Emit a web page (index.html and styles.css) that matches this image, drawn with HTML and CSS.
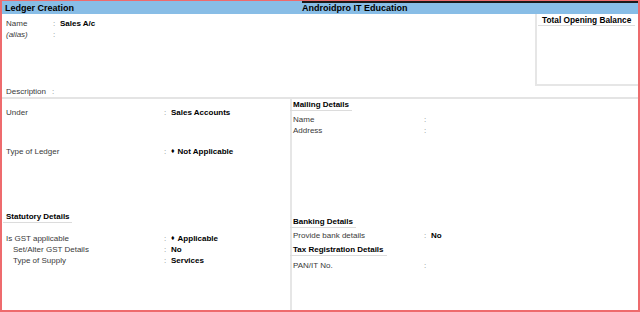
FILE: index.html
```html
<!DOCTYPE html>
<html>
<head>
<meta charset="utf-8">
<link rel="stylesheet" href="styles.css">
</head>
<body>
<div class="frame">
  <div class="header">
    <div class="h-left">Ledger Creation</div>
    <div class="h-right">Androidpro IT Education</div>
  </div>
  <div class="top">
    <div class="top-left">
      <div class="nrow"><span class="lbl">Name</span><span class="col">:</span><span class="val">Sales A/c</span></div>
      <div class="nrow"><span class="lbl it">(alias)</span><span class="col">:</span><span class="val"></span></div>
      <div class="desc"><span class="lbl">Description</span><span class="col dcol">:</span></div>
    </div>
    <div class="balance">
      <div class="bal-title">Total Opening Balance</div>
    </div>
  </div>
  <div class="bottom">
    <div class="left">
      <div class="row r-under"><span class="lbl">Under</span><span class="col">:</span><span class="val">Sales Accounts</span></div>
      <div class="row r-type"><span class="lbl">Type of Ledger</span><span class="col">:</span><span class="val"><span class="dia">♦</span>Not Applicable</span></div>
      <div class="sec s-stat"><span class="sec-t">Statutory Details</span></div>
      <div class="row r-gst"><span class="lbl">Is GST applicable</span><span class="col">:</span><span class="val"><span class="dia">♦</span>Applicable</span></div>
      <div class="row"><span class="lbl ind">Set/Alter GST Details</span><span class="col">:</span><span class="val">No</span></div>
      <div class="row"><span class="lbl ind">Type of Supply</span><span class="col">:</span><span class="val">Services</span></div>
    </div>
    <div class="right">
      <div class="sec s-mail"><span class="sec-t">Mailing Details</span></div>
      <div class="rrow r-name"><span class="lbl">Name</span><span class="col">:</span><span class="val"></span></div>
      <div class="rrow"><span class="lbl">Address</span><span class="col">:</span><span class="val"></span></div>
      <div class="sec s-bank"><span class="sec-t">Banking Details</span></div>
      <div class="rrow r-bank"><span class="lbl">Provide bank details</span><span class="col">:</span><span class="val">No</span></div>
      <div class="sec s-tax"><span class="sec-t">Tax Registration Details</span></div>
      <div class="rrow r-pan"><span class="lbl">PAN/IT No.</span><span class="col">:</span><span class="val"></span></div>
    </div>
  </div>
</div>
</body>
</html>
```
FILE: styles.css
```css
html, body {
  margin: 0;
  padding: 0;
  background: #fff;
}
body {
  font-family: "Liberation Sans", Arial, sans-serif;
  font-size: 8px;
  color: #333;
}
.frame {
  width: 640px;
  height: 312px;
  box-sizing: border-box;
  border: 2px solid #ee6b6d;
  border-top-width: 1px;
  display: flex;
  flex-direction: column;
}
.header {
  height: 13px;
  flex: none;
  display: grid;
  grid-template-columns: 300px 1fr;
  background: linear-gradient(to right, transparent 300px, #1a1a1a 300px) top left / 100% 2px no-repeat, #88bde6;
  font-size: 9px;
  font-weight: bold;
  color: #000;
  line-height: 14px;
}
.h-left { padding-left: 3px; }
.top {
  height: 83px;
  flex: none;
  display: flex;
  border-bottom: 2px solid #e4e4e4;
}
.top-left {
  flex: 1;
  display: flex;
  flex-direction: column;
  padding: 4px 0 0 4px;
}
.nrow {
  display: grid;
  grid-template-columns: 47px 7px auto;
  line-height: 11px;
}
.desc {
  margin-top: auto;
  line-height: 11px;
  display: flex;
}
.dcol { margin-left: 6px; }
.lbl { color: #3a3a3a; white-space: nowrap; }
.it { font-style: italic; }
.col { color: #8a8a8a; }
.val { font-weight: bold; color: #000; white-space: nowrap; }
.dia { font-size: 7px; line-height: 0; margin-right: 3px; vertical-align: 1px; }
.balance {
  width: 101px;
  height: 69px;
  border-left: 2px solid #e6e6e6;
  border-bottom: 2px solid #e6e6e6;
  padding-top: 1px;
}
.bal-title {
  margin: 0 3px 0 1px;
  padding-left: 4px;
  line-height: 10px;
  font-size: 8.3px;
  font-weight: bold;
  color: #000;
  border-bottom: 1px solid #dcdcdc;
}
.bottom {
  flex: 1;
  display: grid;
  grid-template-columns: 288px 2px 1fr;
}
.bottom::before {
  content: "";
  grid-column: 2;
  grid-row: 1;
  background: #e6e6e6;
}
.left {
  grid-column: 1;
  grid-row: 1;
  padding: 8px 0 0 4px;
}
.right {
  grid-column: 3;
  grid-row: 1;
  padding: 1px 0 0 1px;
}
.row {
  display: grid;
  grid-template-columns: 158px 7px auto;
  line-height: 11px;
}
.rrow {
  display: grid;
  grid-template-columns: 131px 7px auto;
  line-height: 11px;
}
.ind { padding-left: 7px; }
.r-type { margin-top: 28px; }
.sec { line-height: 11px; }
.sec-t {
  display: inline-block;
  font-weight: bold;
  color: #000;
  border-bottom: 1px solid #dcdcdc;
  padding: 0 2px 0 3px;
  margin-left: -3px;
}
.s-stat { margin-top: 54px; }
.r-gst { margin-top: 10px; }
.right .sec { line-height: 10px; }
.right .sec-t { padding: 0 3px 0 3px; margin-left: -3px; }
.r-name { margin-top: 3px; }
.s-bank { margin-top: 81px; }
.r-bank { margin-top: 2px; }
.s-tax { margin-top: 4px; }
.r-pan { margin-top: 4px; }
```
